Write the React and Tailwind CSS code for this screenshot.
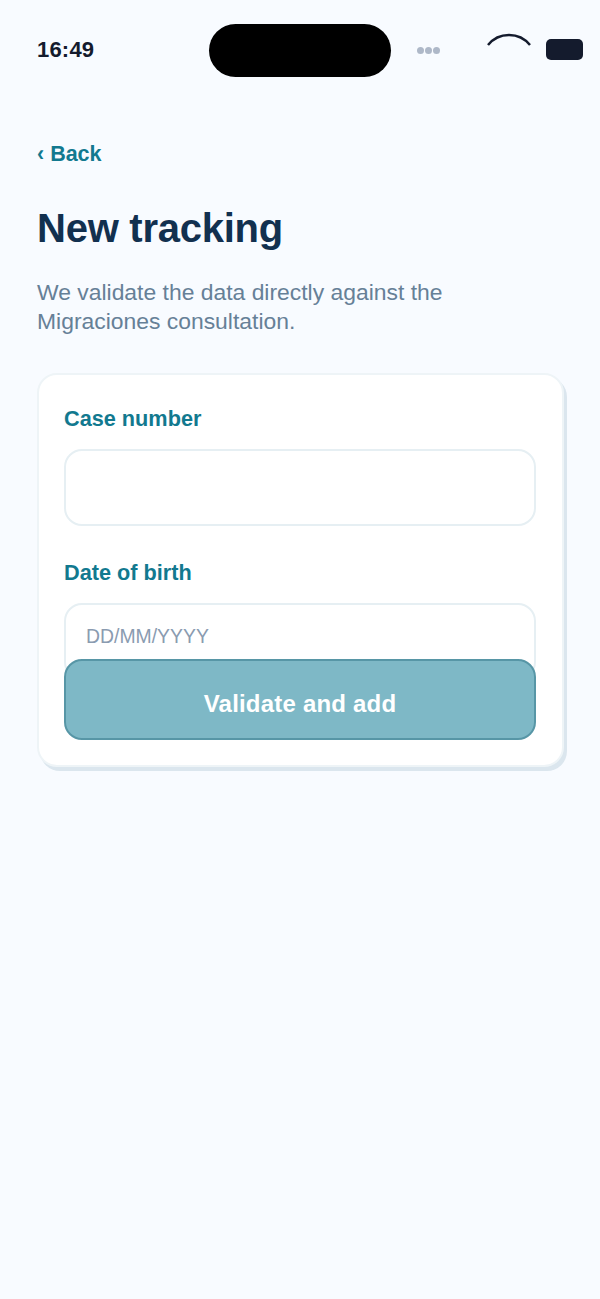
const font = { fontFamily: '"Liberation Sans", Arial, sans-serif' }

const StatusBar = () => {
  return (
    <div className="flex items-start h-[77px] pt-[24px] pl-[37px]">
      <div className="w-[172px] h-[51px] flex items-center text-[22px] font-bold tracking-[0.2px] text-[#141b2d]">16:49</div>
      <div className="w-[182px] h-[53px] rounded-full bg-black"></div>
      <div className="ml-[26px] h-[52px] flex items-center gap-[1px]">
        <span className="w-[7px] h-[7px] rounded-full bg-[#aeb8c8]"></span>
        <span className="w-[7px] h-[7px] rounded-full bg-[#aeb8c8]"></span>
        <span className="w-[7px] h-[7px] rounded-full bg-[#aeb8c8]"></span>
      </div>
      <svg className="ml-[46px] mt-[9px]" width="46" height="14" viewBox="0 0 46 14" fill="none">
        <path d="M2 12A27 27 0 0 1 44 12" stroke="#141b2d" strokeWidth="2.5" />
      </svg>
      <div className="ml-[14px] mt-[15px] w-[37px] h-[21px] rounded-[5px] bg-[#141b2d]"></div>
    </div>
  )
}

const Field = ({ label, placeholder }) => {
  return (
    <div>
      <div className="text-[21.7px] leading-[26px] font-bold text-[#12798f]">{label}</div>
      <div className="mt-[17px] h-[77px] pl-[20px] pb-[10px] flex items-center rounded-[18px] border-2 border-[#e6eff3] bg-white text-[19.4px] text-[#8a9bb0]">
        {placeholder}
      </div>
    </div>
  )
}

const App = () => {
  return (
    <div className="w-[600px] h-[1299px] bg-[#f8fbff] overflow-hidden" style={font}>
      <StatusBar />
      <div className="px-[37px] pt-[63px]">
        <div className="text-[21.5px] leading-[28px] font-bold text-[#12798f]">‹ Back</div>
        <h1 className="mt-[36px] text-[40px] tracking-[-0.25px] leading-[48px] font-bold text-[#12304f]">New tracking</h1>
        <p className="mt-[26px] w-[440px] text-[22.9px] leading-[29px] text-[#668097]">
          We validate the data directly against the Migraciones consultation.
        </p>
        <div className="mt-[37px] w-[527px] h-[394px] pl-[25px] pt-[31px] rounded-[20px] border-2 border-[#eef4f7] bg-white shadow-[3px_4px_0_#dbe6ee]">
          <div className="w-[472px] flex flex-col gap-[34px]">
            <Field label="Case number" />
            <Field label="Date of birth" placeholder="DD/MM/YYYY" />
          </div>
          <button className="-mt-[21px] pt-[9px] relative w-[472px] h-[81px] rounded-[18px] border-2 border-[#5796a6] bg-[#7eb8c6] text-[24px] tracking-[0.2px] font-bold text-white">
            Validate and add
          </button>
        </div>
      </div>
    </div>
  )
}

export default App
